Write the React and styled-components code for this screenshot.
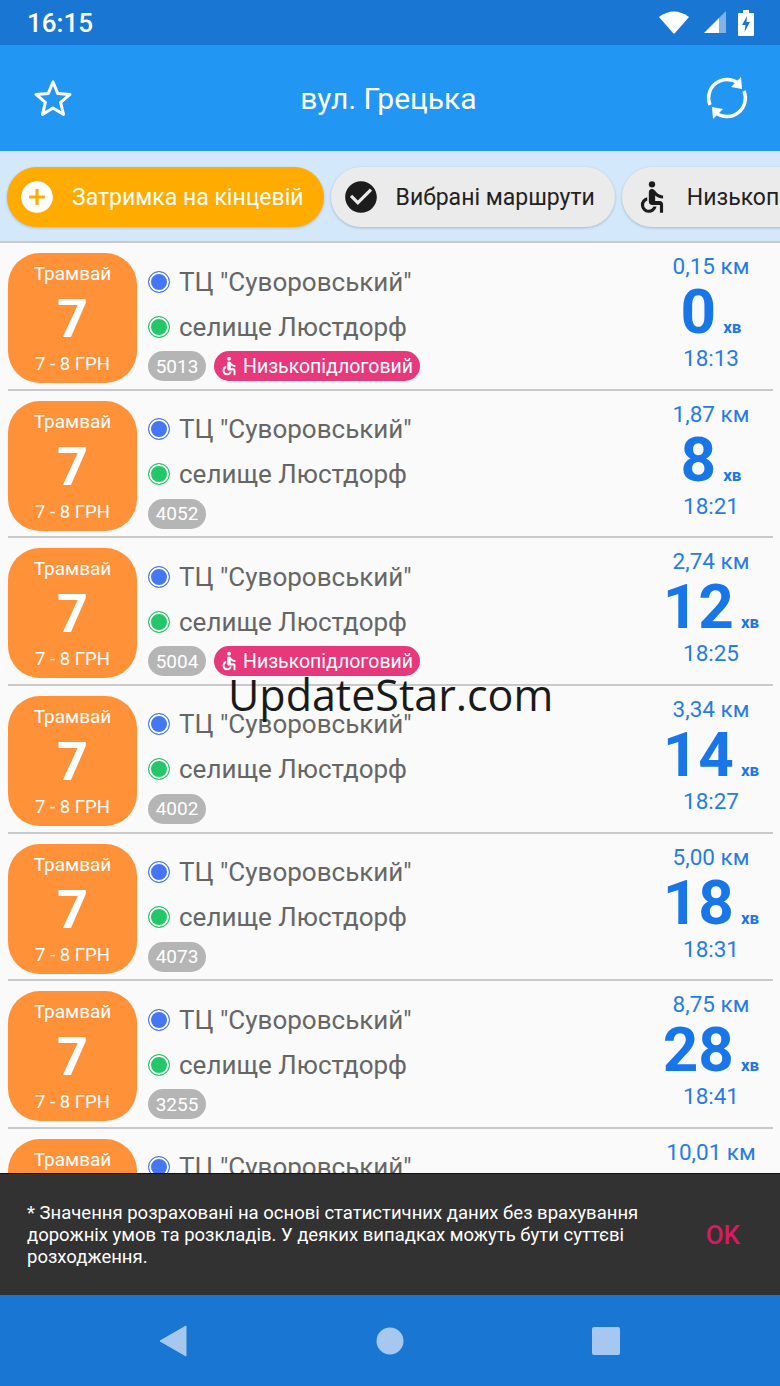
import React from "react";
import styled, { createGlobalStyle } from "styled-components";
import { MdAccessible, MdAddCircle, MdCheckCircle } from "react-icons/md";

const rows = [
  { id: "5013", km: "0,15 км", min: "0", time: "18:13", low: true },
  { id: "4052", km: "1,87 км", min: "8", time: "18:21" },
  { id: "5004", km: "2,74 км", min: "12", time: "18:25", low: true },
  { id: "4002", km: "3,34 км", min: "14", time: "18:27" },
  { id: "4073", km: "5,00 км", min: "18", time: "18:31" },
  { id: "3255", km: "8,75 км", min: "28", time: "18:41" },
  { id: "3301", km: "10,01 км", min: "32", time: "18:45" },
];

const App = () => {
  return (
    <Screen>
      <GlobalStyle />
      <StatusBar>
        <Clock>16:15</Clock>
        <StatusIcons>
          <svg width="38" height="24" viewBox="0 0 38 24">
            <path d="M0 6 Q15 -5 30 6 L16 22 Q15 23 14 22 Z" fill="#fff" />
          </svg>
          <svg width="24" height="24" viewBox="0 0 24 24">
            <path d="M0 22 L15 22 L15 7 Z" fill="#fff" />
            <path d="M15 22 L22 22 L22 0 L15 7 Z" fill="#fff" opacity="0.45" />
          </svg>
          <svg width="16" height="26" viewBox="0 0 16 26">
            <path d="M5 0 H11 V3 H15 Q16 3 16 4 V25 Q16 26 15 26 H1 Q0 26 0 25 V4 Q0 3 1 3 H5 Z" fill="#fff" />
            <path d="M9 6 L4 15 H7.5 L6.5 22 L12 12 H8.5 Z" fill="#1976d2" />
          </svg>
        </StatusIcons>
      </StatusBar>

      <AppBar>
        <svg width="38" height="38" viewBox="0 0 38 38">
          <path
            d="M19 3 L23.7 14.4 L36 15.4 L26.6 23.4 L29.5 35.4 L19 29 L8.5 35.4 L11.4 23.4 L2 15.4 L14.3 14.4 Z"
            fill="none"
            stroke="#fff"
            strokeWidth="3"
            strokeLinejoin="round"
          />
        </svg>
        <Title>вул. Грецька</Title>
        <svg width="44" height="44" viewBox="0 0 44 44">
          <path d="M5 29 A18.5 18.5 0 0 1 33 7" fill="none" stroke="#fff" strokeWidth="3.4" />
          <path d="M39 15 A18.5 18.5 0 0 1 11 37" fill="none" stroke="#fff" strokeWidth="3.4" />
          <path d="M36 1 L37 13 L26 11 Z" fill="#fff" />
          <path d="M8 43 L7 31 L18 33 Z" fill="#fff" />
        </svg>
      </AppBar>

      <FilterBar>
        <Chip $active>
          <MdAddCircle size={38} color="#fff" />
          Затримка на кінцевій
        </Chip>
        <Chip>
          <MdCheckCircle size={38} color="#1c1c1c" />
          Вибрані маршрути
        </Chip>
        <Chip>
          <MdAccessible size={38} color="#1c1c1c" />
          Низькопідлоговий
        </Chip>
      </FilterBar>

      <List>
        {rows.map((row) => (
          <Row key={row.id}>
            <RouteBadge>
              <RouteType>Трамвай</RouteType>
              <RouteNumber>7</RouteNumber>
              <RoutePrice>7 - 8 ГРН</RoutePrice>
            </RouteBadge>
            <Stops>
              <Stop>
                <StopDot $color="#4476f6" />
                ТЦ "Суворовський"
              </Stop>
              <Stop>
                <StopDot $color="#22c768" />
                селище Люстдорф
              </Stop>
              <Tags>
                <VehicleTag>{row.id}</VehicleTag>
                {row.low && (
                  <LowFloorTag>
                    <MdAccessible size={22} />
                    Низькопідлоговий
                  </LowFloorTag>
                )}
              </Tags>
            </Stops>
            <Arrival>
              <Distance>{row.km}</Distance>
              <Minutes>
                <MinutesValue>{row.min}</MinutesValue>
                <MinutesUnit>хв</MinutesUnit>
              </Minutes>
              <Distance>{row.time}</Distance>
            </Arrival>
          </Row>
        ))}
        <Watermark>UpdateStar.com</Watermark>
      </List>

      <Snackbar>
        <SnackText>
          * Значення розраховані на основі статистичних даних без врахування
          дорожніх умов та розкладів. У деяких випадках можуть бути суттєві
          розходження.
        </SnackText>
        <SnackAction>OK</SnackAction>
      </Snackbar>

      <NavBar>
        <svg width="28" height="32" viewBox="0 0 28 32">
          <path d="M27 1 V31 L1 16 Z" fill="#a6c8f0" stroke="#a6c8f0" strokeLinejoin="round" />
        </svg>
        <svg width="28" height="28" viewBox="0 0 28 28">
          <circle cx="14" cy="14" r="13.5" fill="#a6c8f0" />
        </svg>
        <svg width="28" height="28" viewBox="0 0 28 28">
          <rect x="0" y="0" width="28" height="28" rx="2" fill="#a6c8f0" />
        </svg>
      </NavBar>
    </Screen>
  );
};

export default App;

const GlobalStyle = createGlobalStyle`
  html, body {
    margin: 0;
    padding: 0;
    background: #fafafa;
  }
`;

const Screen = styled.div`
  position: relative;
  width: 780px;
  height: 1386px;
  display: flex;
  flex-direction: column;
  overflow: hidden;
  font-family: Roboto, "Noto Sans", sans-serif;
`;

const StatusBar = styled.div`
  height: 45px;
  flex: none;
  padding: 0 26px 0 27px;
  display: flex;
  align-items: center;
  justify-content: space-between;
  background: #1976d2;
`;

const Clock = styled.div`
  font-size: 26px;
  font-weight: 500;
  color: #fff;
`;

const StatusIcons = styled.div`
  display: flex;
  align-items: center;
  gap: 7px;

  svg:last-child {
    margin-left: 3px;
  }
`;

const AppBar = styled.div`
  height: 106px;
  flex: none;
  padding: 0 31px 0 34px;
  display: flex;
  align-items: center;
  justify-content: space-between;
  background: #2196f3;
`;

const Title = styled.div`
  font-size: 30px;
  color: #fff;
`;

const FilterBar = styled.div`
  height: 92px;
  flex: none;
  box-sizing: border-box;
  padding: 16px 0 16px 7px;
  display: flex;
  gap: 7px;
  overflow: hidden;
  background: #d3e8fb;
  border-bottom: 2px solid #c9c9c9;
`;

const Chip = styled.div`
  height: 60px;
  flex: none;
  box-sizing: border-box;
  padding: 0 20px 0 11px;
  display: flex;
  align-items: center;
  gap: 16px;
  border-radius: 30px;
  font-size: 23px;
  white-space: nowrap;
  background: ${(p) => (p.$active ? "#ffab00" : "#ebebeb")};
  color: ${(p) => (p.$active ? "#fff" : "#212121")};
  box-shadow: 0 1px 3px rgba(0, 0, 0, 0.2);
`;

const List = styled.div`
  position: relative;
  flex: 1;
  min-height: 0;
  overflow: hidden;
  background: #fafafa;
`;

const Row = styled.div`
  height: 147.67px;
  box-sizing: border-box;
  margin: 0 7px 0 8px;
  padding-top: 10px;
  display: flex;
  border-bottom: 2px solid #c9c9c9;
`;

const RouteBadge = styled.div`
  width: 129px;
  height: 130px;
  flex: none;
  box-sizing: border-box;
  padding: 10px 0 8px;
  display: flex;
  flex-direction: column;
  align-items: center;
  justify-content: space-between;
  border-radius: 32px;
  background: #ff9139;
  color: #fff;
`;

const RouteType = styled.div`
  font-size: 19px;
  line-height: 22px;
`;

const RouteNumber = styled.div`
  font-size: 54px;
  line-height: 54px;
  font-weight: 700;
`;

const RoutePrice = styled.div`
  font-size: 18.5px;
  line-height: 22px;
`;

const Stops = styled.div`
  flex: 1;
  min-width: 0;
  padding: 6px 0 0 11px;
  display: flex;
  flex-direction: column;
`;

const Stop = styled.div`
  height: 45px;
  display: flex;
  align-items: center;
  gap: 9px;
  font-size: 26px;
  line-height: 30px;
  color: #666;
  white-space: nowrap;
`;

const StopDot = styled.span`
  width: 22px;
  height: 22px;
  flex: none;
  box-sizing: border-box;
  border-radius: 50%;
  border: 1px solid ${(p) => p.$color};
  background: ${(p) => p.$color};
  box-shadow: inset 0 0 0 2px #fff;
`;

const Tags = styled.div`
  margin-top: 2px;
  display: flex;
  gap: 8px;
`;

const VehicleTag = styled.span`
  width: 58px;
  height: 30px;
  display: flex;
  align-items: center;
  justify-content: center;
  border-radius: 15px;
  background: #b5b5b5;
  color: #fff;
  font-size: 19px;
`;

const LowFloorTag = styled.span`
  height: 30px;
  box-sizing: border-box;
  padding: 0 7px 0 4px;
  display: flex;
  align-items: center;
  gap: 3px;
  border-radius: 15px;
  background: #e6387a;
  color: #fff;
  font-size: 19.5px;
  white-space: nowrap;
`;

const Arrival = styled.div`
  width: 124px;
  flex: none;
  display: flex;
  flex-direction: column;
  align-items: center;
  color: #1976e8;
`;

const Distance = styled.div`
  font-size: 22.5px;
  line-height: 26px;
  white-space: nowrap;
  opacity: 0.95;
`;

const Minutes = styled.div`
  height: 66px;
  display: flex;
  align-items: baseline;
  gap: 7px;
  line-height: 66px;
  white-space: nowrap;
`;

const MinutesValue = styled.span`
  font-size: 62px;
  font-weight: 700;
`;

const MinutesUnit = styled.span`
  font-size: 17px;
  font-weight: 700;
`;

const Watermark = styled.div`
  position: absolute;
  left: 228px;
  top: 422px;
  font-family: "Open Sans", sans-serif;
  font-size: 43px;
  line-height: 60px;
  color: #1a1a1a;
  white-space: nowrap;
`;

const Snackbar = styled.div`
  height: 122px;
  flex: none;
  box-sizing: border-box;
  padding: 0 40px 0 27px;
  display: flex;
  align-items: center;
  justify-content: space-between;
  gap: 30px;
  background: #323232;
  border-top: 1px solid #111;
`;

const SnackText = styled.div`
  font-size: 18.5px;
  line-height: 22px;
  color: #fff;
`;

const SnackAction = styled.div`
  font-size: 26px;
  font-weight: 500;
  color: #d81b60;
`;

const NavBar = styled.div`
  height: 91px;
  flex: none;
  padding: 0 160px 0 159px;
  display: flex;
  align-items: center;
  justify-content: space-between;
  background: #1976d2;
`;
